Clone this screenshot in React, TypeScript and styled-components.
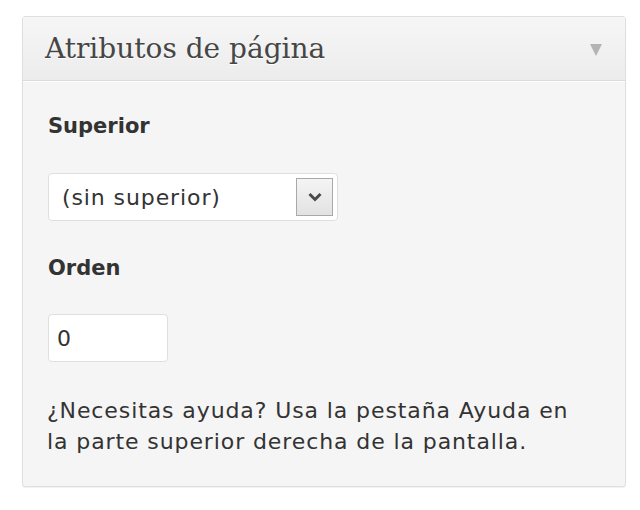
import React from "react";
import styled, { createGlobalStyle } from "styled-components";

const GlobalStyle = createGlobalStyle`
  html, body {
    margin: 0;
    padding: 0;
    background: #ffffff;
  }
  body {
    font-family: "DejaVu Sans", "Liberation Sans", Arial, sans-serif;
  }
`;

const Page = styled.div`
  width: 640px;
  height: 510px;
  padding: 16px 14px 0 22px;
  box-sizing: border-box;
`;

const Box = styled.div`
  width: 604px;
  height: 471px;
  box-sizing: border-box;
  border: 1px solid #dfdfdf;
  border-radius: 3px;
  background: #f5f5f5;
  box-shadow: 0 1px 1px rgba(0, 0, 0, 0.06);
  display: flex;
  flex-direction: column;
`;

const Header = styled.div`
  height: 64px;
  box-sizing: border-box;
  display: flex;
  align-items: center;
  justify-content: space-between;
  padding: 0 23px 0 22px;
  background: linear-gradient(to bottom, #f6f6f6, #ececec);
  border-bottom: 1px solid #dcdcdc;
  box-shadow: 0 1px 0 #ffffff;
`;

const Title = styled.h3`
  margin: 0;
  font-family: "DejaVu Serif", Georgia, serif;
  font-weight: normal;
  font-size: 28px;
  color: #464646;
  text-shadow: 0 1px 0 #ffffff;
`;

const Toggle = styled.span`
  width: 0;
  height: 0;
  border-left: 6px solid transparent;
  border-right: 6px solid transparent;
  border-top: 12px solid #b4b4b4;
  margin-top: 2px;
`;

const Body = styled.div`
  padding: 33px 25px 0 25px;
  display: flex;
  flex-direction: column;
  align-items: flex-start;
  color: #333333;
  font-size: 22px;
`;

const Label = styled.p<{ $top?: number }>`
  margin: ${(p) => p.$top ?? 0}px 0 0 0;
  font-weight: bold;
  font-size: 21px;
  line-height: 24px;
`;

const Field = styled.div<{ $width: number; $top: number; $indent: number }>`
  width: ${(p) => p.$width}px;
  height: 48px;
  box-sizing: border-box;
  margin-top: ${(p) => p.$top}px;
  background: #ffffff;
  border: 1px solid #dfdfdf;
  border-radius: 4px;
  display: flex;
  align-items: center;
  justify-content: space-between;
  padding: 0 4px 0 ${(p) => p.$indent}px;
  letter-spacing: 0.9px;
`;

const DropButton = styled.span`
  width: 37px;
  height: 38px;
  box-sizing: border-box;
  border: 1px solid #a9a9a9;
  background: linear-gradient(to bottom, #f4f4f4, #e2e2e2);
  display: flex;
  align-items: center;
  justify-content: center;
`;

const Help = styled.p`
  margin: 33px 0 0 -1px;
  line-height: 31px;
  letter-spacing: 0.9px;
`;

export default function App() {
  return (
    <Page>
      <GlobalStyle />
      <Box>
        <Header>
          <Title>Atributos de página</Title>
          <Toggle />
        </Header>
        <Body>
          <Label>Superior</Label>
          <Field $width={290} $top={35} $indent={13}>
            <span>(sin superior)</span>
            <DropButton>
              <svg width="14" height="10" viewBox="0 0 14 10">
                <path d="M1.5 2 L7 7.5 L12.5 2" fill="none" stroke="#4a4a4a" strokeWidth="3" />
              </svg>
            </DropButton>
          </Field>
          <Label $top={35}>Orden</Label>
          <Field $width={120} $top={34} $indent={8}>0</Field>
          <Help>
            ¿Necesitas ayuda? Usa la pestaña Ayuda en
            <br />
            la parte superior derecha de la pantalla.
          </Help>
        </Body>
      </Box>
    </Page>
  );
}
